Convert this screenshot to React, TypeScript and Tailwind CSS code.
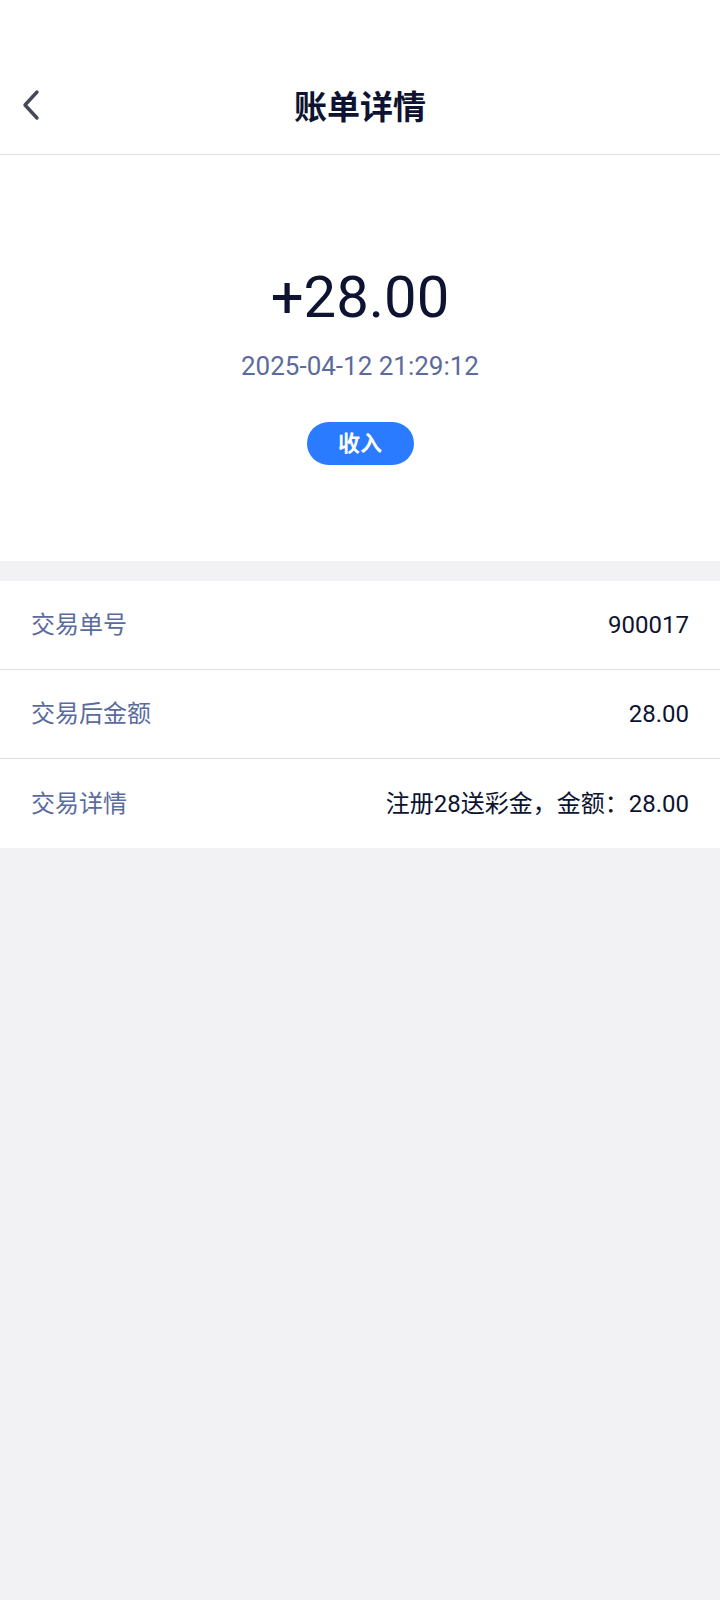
import React from 'react';

interface DetailRow {
  label: string;
  value: string;
}

const rows: DetailRow[] = [
  { label: '交易单号', value: '900017' },
  { label: '交易后金额', value: '28.00' },
  { label: '交易详情', value: '注册28送彩金，金额：28.00' },
];

const font = { fontFamily: 'Roboto, "Noto Sans CJK SC", sans-serif' };

const App: React.FC = () => {
  return (
    <div className="min-h-[1600px] w-[720px] bg-[#f2f2f4]" style={font}>
      <div className="bg-white">
        <div className="h-[60px]" />
        <div className="relative flex h-[95px] items-center justify-center border-b border-[#dde1ee]">
          <button className="absolute left-[16px] top-[25px] p-1">
            <svg width="24" height="32" viewBox="0 0 24 32" fill="none">
              <path d="M17 3 L5 16 L17 29" stroke="#45475a" strokeWidth="3.4" strokeLinecap="round" strokeLinejoin="round" />
            </svg>
          </button>
          <h1 className="text-[33px] font-bold text-[#0d1330] leading-none">账单详情</h1>
        </div>

        <div className="flex h-[406px] flex-col items-center pt-[113px]">
          <p className="text-[58px] leading-none text-[#0d1330]">+28.00</p>
          <p className="mt-[27px] text-[26px] leading-none text-[#5b6b9e]">2025-04-12 21:29:12</p>
          <span className="mt-[43px] flex h-[43px] w-[107px] items-center justify-center rounded-full bg-[#2a7bff] text-[22px] font-bold text-white">
            收入
          </span>
        </div>
      </div>

      <div className="mt-[20px] bg-white">
        {rows.map((row, i) => (
          <div
            key={row.label}
            className={`flex h-[89px] items-center justify-between px-[31px] ${i < rows.length - 1 ? 'border-b border-[#dde1ee]' : ''}`}
          >
            <span className="text-[24px] text-[#5b6b9e]">{row.label}</span>
            <span className="text-[24px] text-[#0d1330]">{row.value}</span>
          </div>
        ))}
      </div>
    </div>
  );
};

export default App;
